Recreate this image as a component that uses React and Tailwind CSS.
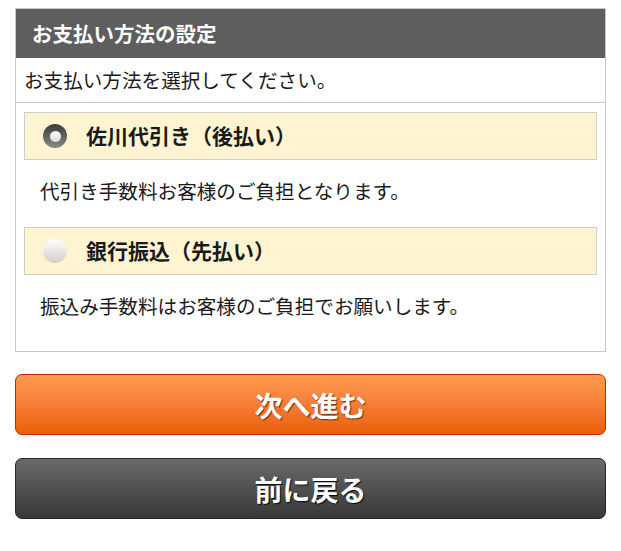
import { useState } from 'react';

const options = [
  { id: 'sagawa', label: '佐川代引き（後払い）', note: '代引き手数料お客様のご負担となります。' },
  { id: 'bank', label: '銀行振込（先払い）', note: '振込み手数料はお客様のご負担でお願いします。' },
];

const Radio = ({ checked }) =>
  checked ? (
    <span className="w-6 h-6 rounded-full flex items-center justify-center bg-gradient-to-b from-[#3c3c3c] to-[#8a8a8a] shrink-0">
      <span className="w-[11px] h-[11px] rounded-full bg-gradient-to-b from-white to-[#d8d8d8]" />
    </span>
  ) : (
    <span className="w-6 h-6 rounded-full bg-gradient-to-b from-white to-[#d2cfc8] shrink-0" />
  );

export default function App() {
  const [method, setMethod] = useState('sagawa');

  return (
    <div
      className="bg-white px-[15px] pt-2 pb-8 text-[#1a1a1a]"
      style={{ fontFamily: '"Noto Sans CJK JP", "Noto Sans", sans-serif' }}
    >
      <div className="border border-[#c9c9c9]">
        <div className="h-[49px] bg-[#5e5e5e] flex items-center px-4 text-white font-bold text-[20.5px]">
          お支払い方法の設定
        </div>
        <div className="h-[45px] flex items-center px-2 border-b border-[#c9c9c9] text-[19.6px]">
          お支払い方法を選択してください。
        </div>
        <div className="px-2 pt-[9px]">
          {options.map((opt) => (
            <div key={opt.id}>
              <label
                className="h-[48px] flex items-center gap-[19px] pl-[18px] bg-[#fff4d2] border border-[#cfcfcf] cursor-pointer"
                onClick={() => setMethod(opt.id)}
              >
                <Radio checked={method === opt.id} />
                <span className="font-bold text-[21px]">{opt.label}</span>
              </label>
              <p className="h-[67px] flex items-center pl-4 pb-[6px] text-[19.6px]">{opt.note}</p>
            </div>
          ))}
          <div className="h-[9px]" />
        </div>
      </div>

      <button className="mt-[22px] w-full h-[61px] rounded-[7px] border border-[#cc1f00] bg-gradient-to-b from-[#ff9a52] to-[#ea5f00] text-white font-bold text-[28px] [text-shadow:1px_1px_1px_rgba(80,30,0,0.8)]">
        次へ進む
      </button>
      <button className="mt-[23px] w-full h-[61px] rounded-[7px] border border-[#262626] bg-gradient-to-b from-[#6a6a6a] to-[#383838] text-white font-bold text-[28px] [text-shadow:1px_1px_1px_rgba(0,0,0,0.9)]">
        前に戻る
      </button>
    </div>
  );
}
